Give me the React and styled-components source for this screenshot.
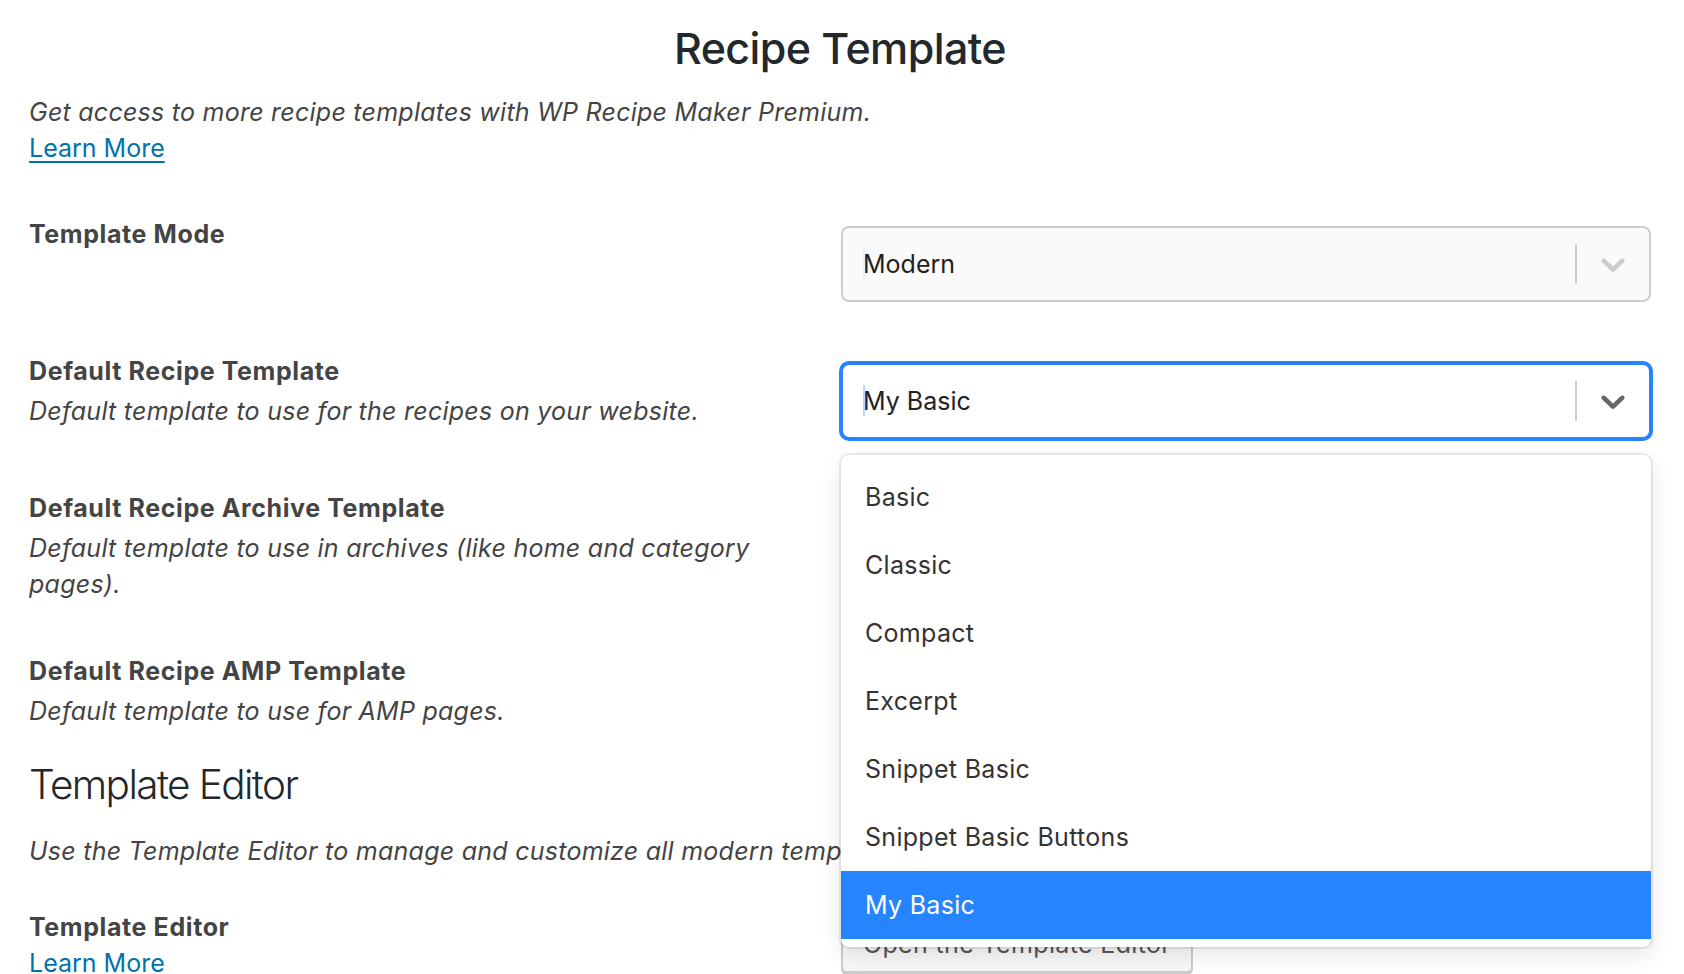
import React from 'react';
import styled, { createGlobalStyle } from 'styled-components';

const GlobalStyle = createGlobalStyle`
    html, body {
        margin: 0;
        padding: 0;
        background: #ffffff;
    }

    body {
        font-family: Inter, "Noto Sans", "Liberation Sans", sans-serif;
        color: #444;
        overflow: hidden;
    }
`

const Page = styled.div`
    padding: 0 33px 0 29px;
`

const Title = styled.h1`
    margin: 22px 0 0;
    font-size: 43px;
    line-height: 52px;
    font-weight: 500;
    letter-spacing: -0.6px;
    color: #23282d;
    text-align: center;
`

const Intro = styled.p`
    margin: 20px 0 0;
    font-size: 25px;
    line-height: 36px;
    font-style: italic;
    letter-spacing: 0.25px;
    color: #444;
`

const Link = styled.a`
    display: block;
    font-size: 25px;
    line-height: 36px;
    color: #0073aa;
    text-decoration: ${(p) => (p.$underline ? 'underline' : 'none')};
    text-underline-offset: 4px;
    text-decoration-thickness: 2px;
`

const Table = styled.div`
    display: flex;
    flex-direction: column;
    gap: 51px;
    margin-top: ${(p) => p.$top || 0}px;
`

const Row = styled.div`
    display: flex;
    align-items: flex-start;
`

const LabelCol = styled.div`
    flex: 0 0 812px;
    box-sizing: border-box;
    padding-right: 40px;
`

const FieldCol = styled.div`
    flex: 1;
    padding-top: ${(p) => p.$top ?? 10}px;
`

const Label = styled.div`
    font-size: 25px;
    line-height: 36px;
    font-weight: 700;
    letter-spacing: 0.6px;
    color: #444;
    margin-bottom: ${(p) => p.$gap ?? 4}px;
`

const Desc = styled.div`
    font-size: 25px;
    line-height: 36px;
    font-style: italic;
    letter-spacing: 0.25px;
    color: #444;
`

const SectionTitle = styled.h2`
    margin: 20px 0 0;
    font-size: 40.5px;
    line-height: 52px;
    font-weight: 300;
    letter-spacing: -1.6px;
    color: #23282d;
`

const SectionIntro = styled(Intro)`
    margin-top: 22px;
    white-space: nowrap;
`

/* react-select look, at 2x */
const SelectWrap = styled.div`
    position: relative;
`

const Control = styled.div`
    display: flex;
    align-items: center;
    box-sizing: border-box;
    min-height: 76px;
    border: 2px solid ${(p) => (p.$focused ? '#2684ff' : '#cccccc')};
    box-shadow: ${(p) => (p.$focused ? '0 0 0 2px #2684ff' : 'none')};
    border-radius: 8px;
    background: ${(p) => (p.$focused ? '#ffffff' : '#fafafa')};
`

const ValueBox = styled.div`
    position: relative;
    flex: 1;
    padding: 4px 16px;
`

const SingleValue = styled.div`
    margin: 0 4px;
    font-size: 25px;
    line-height: 36px;
    color: #222;
`

const Caret = styled.span`
    position: absolute;
    left: 20px;
    top: 6px;
    width: 2px;
    height: 31px;
    background: ${(p) => (p.$focused ? '#bcd7ff' : '#eeeeee')};
`

const Separator = styled.span`
    align-self: stretch;
    width: 2px;
    margin: 16px 0;
    background: #cccccc;
`

const Indicator = styled.div`
    display: flex;
    padding: 16px;
    color: ${(p) => (p.$focused ? '#666666' : '#cccccc')};
`

const Menu = styled.div`
    position: absolute;
    z-index: 2;
    top: 100%;
    left: 0;
    right: 0;
    margin-top: 16px;
    padding: 8px 0;
    background: #ffffff;
    border-radius: 8px;
    box-shadow: 0 0 0 2px rgba(0, 0, 0, 0.08), 0 8px 22px rgba(0, 0, 0, 0.1);
`

const Option = styled.div`
    padding: 16px 24px;
    font-size: 25px;
    line-height: 36px;
    letter-spacing: 0.3px;
    color: ${(p) => (p.$selected ? '#ffffff' : '#333333')};
    background: ${(p) => (p.$selected ? '#2684ff' : 'transparent')};
`

const Button = styled.button`
    box-sizing: border-box;
    height: 58px;
    padding: 0 20px;
    font-family: inherit;
    font-size: 25px;
    line-height: 54px;
    letter-spacing: 0.35px;
    color: #555;
    background: #f7f7f7;
    border: 2px solid #cccccc;
    border-radius: 6px;
    box-shadow: 0 2px 0 #cccccc;
`

function Chevron() {
    return (
        <svg width="40" height="40" viewBox="0 0 20 20" fill="currentColor" aria-hidden="true">
            <path d="M4.516 7.548c0.436-0.446 1.043-0.481 1.576 0l3.908 3.747 3.908-3.747c0.533-0.481 1.141-0.446 1.574 0 0.436 0.445 0.408 1.197 0 1.615-0.406 0.418-4.695 4.502-4.695 4.502-0.217 0.223-0.502 0.335-0.787 0.335s-0.57-0.112-0.789-0.335c0 0-4.287-4.084-4.695-4.502s-0.436-1.17 0-1.615z" />
        </svg>
    );
}

const templates = ['Basic', 'Classic', 'Compact', 'Excerpt', 'Snippet Basic', 'Snippet Basic Buttons', 'My Basic'];

function Select({ value, focused, open }) {
    return (
        <SelectWrap>
            <Control $focused={focused}>
                <ValueBox>
                    <SingleValue>{value}</SingleValue>
                    <Caret $focused={focused} />
                </ValueBox>
                <Separator />
                <Indicator $focused={focused}>
                    <Chevron />
                </Indicator>
            </Control>
            {open && (
                <Menu>
                    {templates.map((t) => (
                        <Option key={t} $selected={t === value}>{t}</Option>
                    ))}
                </Menu>
            )}
        </SelectWrap>
    );
}

function SettingRow({ label, desc, children, fieldTop, labelGap }) {
    return (
        <Row>
            <LabelCol>
                <Label $gap={labelGap}>{label}</Label>
                {desc}
            </LabelCol>
            <FieldCol $top={fieldTop}>{children}</FieldCol>
        </Row>
    );
}

export default function App() {
    return (
        <Page>
            <GlobalStyle />
            <Title>Recipe Template</Title>
            <Intro>Get access to more recipe templates with WP Recipe Maker Premium.</Intro>
            <Link href="#" $underline>Learn More</Link>

            <Table $top={50}>
                <SettingRow label="Template Mode">
                    <Select value="Modern" />
                </SettingRow>
                <SettingRow
                    label="Default Recipe Template"
                    desc={<Desc>Default template to use for the recipes on your website.</Desc>}
                >
                    <Select value="My Basic" focused open />
                </SettingRow>
                <SettingRow
                    label="Default Recipe Archive Template"
                    desc={<Desc>Default template to use in archives (like home and category pages).</Desc>}
                >
                    <Select value="My Basic" />
                </SettingRow>
                <SettingRow
                    label="Default Recipe AMP Template"
                    desc={<Desc>Default template to use for AMP pages.</Desc>}
                >
                    <Select value="My Basic" />
                </SettingRow>
            </Table>

            <SectionTitle>Template Editor</SectionTitle>
            <SectionIntro>Use the Template Editor to manage and customize all modern templates.</SectionIntro>

            <Table $top={40}>
                <SettingRow
                    label="Template Editor"
                    labelGap={0}
                    fieldTop={6}
                    desc={<Link href="#">Learn More</Link>}
                >
                    <Button>Open the Template Editor</Button>
                </SettingRow>
            </Table>
        </Page>
    );
}
